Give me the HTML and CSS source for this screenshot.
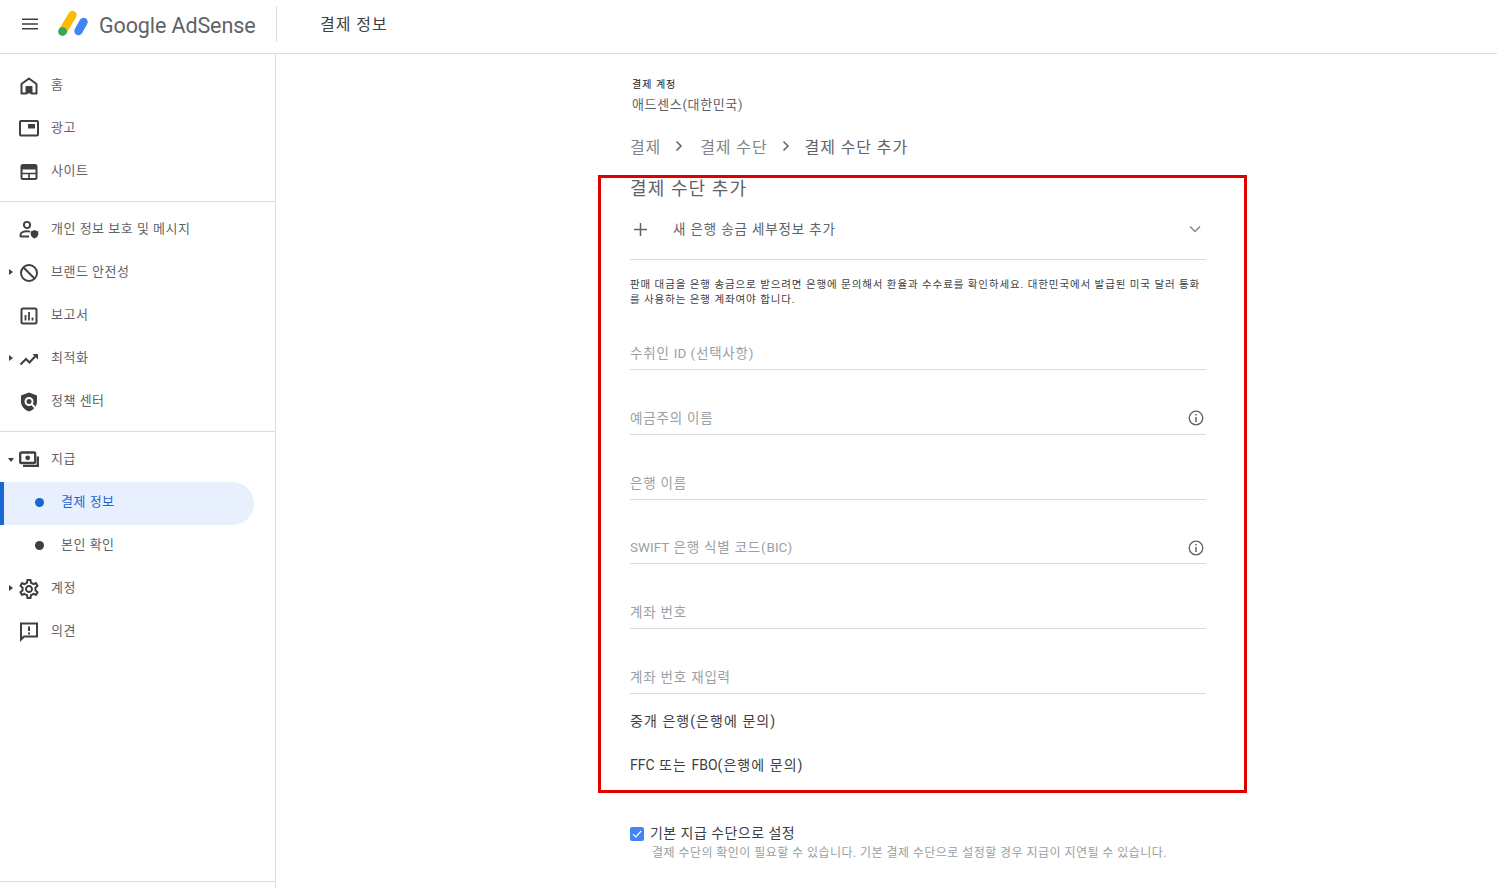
FILE: index.html
```html
<!DOCTYPE html>
<html lang="ko">
<head>
<meta charset="utf-8">
<title>결제 정보</title>
<link rel="stylesheet" href="styles.css">
</head>
<body>
<header class="topbar">
  <div class="brand">
    <svg class="menu-icon" viewBox="0 0 18 12"><path d="M0 1h17M0 6h17M0 11h17" stroke="#3c4043" stroke-width="1.7" fill="none"/></svg>
    <svg class="logo" viewBox="0 0 32 28"><path d="M6 21 15.500 5" stroke="#fbbc04" stroke-width="8.400" stroke-linecap="round" fill="none"/><path d="M21.500 21 26.500 12" stroke="#4285f4" stroke-width="8.400" stroke-linecap="round" fill="none"/><circle cx="5.500" cy="21.500" r="4.400" fill="#34a853"/></svg>
    <span class="brand-text">Google AdSense</span>
  </div>
  <div class="page-title"><span class="page-title-sep"></span>결제 정보</div>
</header>
<div class="layout">
  <nav class="sidebar">
    <div class="nav-group first">
      <a class="nav-row"><svg class="ico" viewBox="0 0 20 20"><path d="M2.500 17.500V8L10 2.500 17.500 8v9.500h-5V11h-5v6.500z" fill="none" stroke="#3c4043" stroke-width="2" stroke-linejoin="round"/><rect x="7.500" y="11" width="5" height="6.500" fill="#3c4043"/></svg><span>홈</span></a>
      <a class="nav-row"><svg class="ico" viewBox="0 0 20 20"><rect x="1" y="2" width="18" height="14.500" rx="1" fill="none" stroke="#3c4043" stroke-width="2"/><rect x="9" y="5" width="7" height="4.500" fill="#3c4043"/></svg><span>광고</span></a>
      <a class="nav-row"><svg class="ico" viewBox="0 0 20 20"><rect x="2.500" y="3" width="15" height="14" rx="1.500" fill="none" stroke="#3c4043" stroke-width="2"/><rect x="2" y="3" width="16" height="4.500" fill="#3c4043"/><path d="M2 11.500h16M10 11.500V17" stroke="#3c4043" stroke-width="1.600"/></svg><span>사이트</span></a>
    </div>
    <div class="nav-group">
      <a class="nav-row"><svg class="ico" viewBox="0 0 20 20"><circle cx="8" cy="5" r="3.100" fill="none" stroke="#3c4043" stroke-width="1.900"/><path d="M1.500 17v-2c0-2.500 3.500-3.700 6.500-3.700 1 0 2 .1 3 .4M1.500 16.500h8.500" fill="none" stroke="#3c4043" stroke-width="1.900"/><path d="M15.500 10l3.800 1.400v2.600c0 2.300-1.600 3.700-3.800 4.500-2.200-.8-3.800-2.200-3.800-4.500v-2.600z" fill="#3c4043"/></svg><span>개인 정보 보호 및 메시지</span></a>
      <a class="nav-row"><span class="caret"></span><svg class="ico" viewBox="0 0 20 20"><circle cx="10" cy="10" r="8" fill="none" stroke="#3c4043" stroke-width="2"/><path d="M4.500 4.500l11 11" stroke="#3c4043" stroke-width="2"/></svg><span>브랜드 안전성</span></a>
      <a class="nav-row"><svg class="ico" viewBox="0 0 20 20"><rect x="2.500" y="2.500" width="15" height="15" rx="1.500" fill="none" stroke="#3c4043" stroke-width="2"/><path d="M6.500 9v5.500M10 6v8.500M13.500 11.500v3" stroke="#3c4043" stroke-width="1.800"/></svg><span>보고서</span></a>
      <a class="nav-row"><span class="caret"></span><svg class="ico" viewBox="0 0 20 20"><path d="M1.500 15.500l5.500-5.500 3.500 3.500 6-6.500" fill="none" stroke="#3c4043" stroke-width="2.100"/><path d="M13.500 5h5.500v5.500z" fill="#3c4043"/></svg><span>최적화</span></a>
      <a class="nav-row"><svg class="ico" viewBox="0 0 20 20"><path d="M10 .500l8 3v6c0 4.700-3.300 8.300-8 10-4.700-1.700-8-5.300-8-10v-6z" fill="#3c4043"/><circle cx="10" cy="9.500" r="3.500" fill="none" stroke="#fff" stroke-width="2"/><path d="M12.500 12l3.500 3.500" stroke="#fff" stroke-width="2"/></svg><span>정책 센터</span></a>
    </div>
    <div class="nav-group">
      <a class="nav-row"><span class="caret open"></span><svg class="ico" viewBox="0 0 20 20"><rect x="1.200" y="2.500" width="15" height="10.500" rx="1" fill="none" stroke="#3c4043" stroke-width="2.300"/><circle cx="8.700" cy="7.800" r="2.400" fill="#3c4043"/><path d="M18.800 6.500V15.800H4" fill="none" stroke="#3c4043" stroke-width="2.300"/></svg><span>지급</span></a>
      <a class="nav-row sub active"><span class="dot"></span><span>결제 정보</span></a>
      <a class="nav-row sub"><span class="dot"></span><span>본인 확인</span></a>
      <a class="nav-row"><span class="caret"></span><svg class="ico" viewBox="2 2 20 20"><path fill="#3c4043" d="M19.430 12.980c.04-.32.070-.64.070-.98s-.03-.66-.07-.98l2.110-1.650c.19-.15.240-.42.120-.64l-2-3.460c-.12-.22-.39-.3-.61-.22l-2.490 1c-.52-.4-1.080-.73-1.690-.98l-.38-2.650A.49.49 0 0 0 14 2h-4c-.25 0-.46.180-.49.420l-.38 2.650c-.61.250-1.170.590-1.690.980l-2.490-1c-.23-.090-.49 0-.61.220l-2 3.460c-.13.220-.07.490.12.640l2.110 1.650c-.04.320-.07.650-.07.980s.03.660.07.980l-2.110 1.650c-.19.150-.24.420-.12.640l2 3.460c.12.220.39.300.61.220l2.490-1c.52.400 1.080.730 1.690.980l.38 2.650c.03.240.24.420.49.420h4c.25 0 .46-.18.490-.42l.38-2.650c.61-.25 1.170-.59 1.690-.98l2.490 1c.23.090.49 0 .61-.22l2-3.460c.12-.22.070-.49-.12-.64l-2.110-1.650zM17.450 11.270c.04.310.05.520.05.730s-.02.430-.05.730l-.14 1.130.89.700 1.080.840-.7 1.210-1.270-.51-1.040-.42-.9.680c-.43.320-.84.560-1.250.730l-1.060.430-.16 1.130-.2 1.350h-1.400l-.19-1.350-.16-1.130-1.060-.43c-.43-.18-.83-.41-1.230-.71l-.91-.7-1.060.43-1.270.51-.7-1.210 1.080-.84.890-.7-.14-1.130c-.03-.31-.05-.54-.05-.74s.02-.43.05-.73l.14-1.130-.89-.7-1.080-.84.7-1.210 1.270.51 1.040.42.900-.68c.43-.32.840-.56 1.250-.73l1.060-.43.160-1.130.2-1.350h1.390l.19 1.350.16 1.130 1.060.43c.43.180.83.410 1.230.71l.91.700 1.060-.43 1.270-.51.7 1.210-1.070.85-.89.7.14 1.130zM12 8c-2.210 0-4 1.790-4 4s1.790 4 4 4 4-1.790 4-4-1.790-4-4-4zm0 6c-1.100 0-2-.9-2-2s.9-2 2-2 2 .9 2 2-.9 2-2 2z"/></svg><span>계정</span></a>
      <a class="nav-row"><svg class="ico" viewBox="0 0 20 20"><path d="M2 1.500h16v13H5l-3 3z" fill="none" stroke="#3c4043" stroke-width="2" stroke-linejoin="miter"/><path d="M10 4.500v4.500M10 10.500v2" stroke="#3c4043" stroke-width="2"/></svg><span>의견</span></a>
    </div>
  </nav>
  <main class="main">
    <div class="account">
      <div class="account-label">결제 계정</div>
      <div class="account-name">애드센스(대한민국)</div>
    </div>
    <div class="crumbs">
      <span>결제</span><svg class="chev" viewBox="0 0 8 12"><path d="M1.500 1.500 6 6l-4.500 4.500" fill="none" stroke="#5f6368" stroke-width="1.500"/></svg>
      <span>결제 수단</span><svg class="chev" viewBox="0 0 8 12"><path d="M1.500 1.500 6 6l-4.500 4.500" fill="none" stroke="#5f6368" stroke-width="1.500"/></svg>
      <span class="crumb-now">결제 수단 추가</span>
    </div>
    <section class="redbox">
      <h1 class="form-title">결제 수단 추가</h1>
      <div class="add-row">
        <svg class="plus" viewBox="0 0 14 14"><path d="M7 0v14M0 7h14" stroke="#5f6368" stroke-width="1.600"/></svg>
        <span class="add-label">새 은행 송금 세부정보 추가</span>
        <svg class="down" viewBox="0 0 12 8"><path d="M1 1.500l5 5 5-5" fill="none" stroke="#80868b" stroke-width="1.500"/></svg>
      </div>
      <p class="notice">판매 대금을 은행 송금으로 받으려면 은행에 문의해서 환율과 수수료를 확인하세요. 대한민국에서 발급된 미국 달러 통화를 사용하는 은행 계좌여야 합니다.</p>
      <div class="field first-field"><span>수취인 <span class="lat">ID</span> (선택사항)</span></div>
      <div class="field"><span>예금주의 이름</span><svg class="info" viewBox="0 0 16 16"><circle cx="8" cy="8" r="6.800" fill="none" stroke="#5f6368" stroke-width="1.300"/><path d="M8 7v5M8 4v1.600" stroke="#5f6368" stroke-width="1.500"/></svg></div>
      <div class="field"><span>은행 이름</span></div>
      <div class="field latin-row"><span><span class="lat">SWIFT</span> 은행 식별 코드(<span class="lat">BIC</span>)</span><svg class="info" viewBox="0 0 16 16"><circle cx="8" cy="8" r="6.800" fill="none" stroke="#5f6368" stroke-width="1.300"/><path d="M8 7v5M8 4v1.600" stroke="#5f6368" stroke-width="1.500"/></svg></div>
      <div class="field"><span>계좌 번호</span></div>
      <div class="field"><span>계좌 번호 재입력</span></div>
      <div class="plain first-plain">중개 은행(은행에 문의)</div>
      <div class="plain"><span class="lat">FFC</span> 또는 <span class="lat">FBO</span>(은행에 문의)</div>
    </section>
    <div class="check-row">
      <span class="checkbox"><svg viewBox="0 0 14 14"><path d="M3 7.200l2.800 2.800L11.200 4" fill="none" stroke="#fff" stroke-width="1.200"/></svg></span>
      <div>
        <div class="check-label">기본 지급 수단으로 설정</div>
        <div class="check-help">결제 수단의 확인이 필요할 수 있습니다. 기본 결제 수단으로 설정할 경우 지급이 지연될 수 있습니다.</div>
      </div>
    </div>
  </main>
</div>
</body>
</html>
```
FILE: styles.css
```css
* { box-sizing: border-box; }
html, body { height: 100%; }
body {
  margin: 0;
  height: 888px;
  overflow: hidden;
  background: #fff;
  color: #3c4043;
  font-family: Roboto, "Noto Sans CJK KR", sans-serif;
  font-size: 13px;
}
.lat { letter-spacing: 0; }
.topbar {
  height: 54px;
  display: flex;
  border-bottom: 1px solid #dadce0;
}
.brand {
  width: 276px;
  display: flex;
  align-items: center;
  padding: 0 0 6px 22px;
}
.menu-icon { width: 17px; height: 12px; flex: none; }
.logo { width: 32px; height: 28px; margin-left: 18px; flex: none; }
.brand-text {
  margin: 3px 0 0 10px;
  font-size: 21.500px;
  color: #5f6368;
  letter-spacing: -0.1px;
  white-space: nowrap;
}
.page-title {
  position: relative;
  padding: 16px 0 0 44px;
  font-size: 16px;
  line-height: 18px;
  letter-spacing: 0.95px;
  color: #3c4043;
}
.page-title-sep {
  position: absolute;
  left: 0;
  top: 6px;
  width: 1px;
  height: 36px;
  background: #dadce0;
}
.layout { display: flex; height: 834px; }
.sidebar {
  width: 276px;
  flex: none;
  border-right: 1px solid #dadce0;
}
.nav-group {
  padding: 5px 0 9px;
  border-bottom: 1px solid #dadce0;
}
.nav-group.first { padding-top: 9px; }
.nav-group:last-child { height: 450px; }
.nav-row {
  position: relative;
  height: 43px;
  display: flex;
  align-items: center;
  padding-left: 19px;
  color: #5f6368;
  font-size: 13px;
  letter-spacing: 0.5px;
}
.nav-row > span:last-child { padding-bottom: 2px; }
.ico { width: 20px; height: 20px; flex: none; margin: 2px 12px 0 0; }
.caret {
  position: absolute;
  left: 9px;
  top: 19px;
  border-left: 4px solid #3c4043;
  border-top: 3px solid transparent;
  border-bottom: 3px solid transparent;
}
.caret.open {
  left: 8px;
  top: 21px;
  border-top: 4px solid #3c4043;
  border-left: 3px solid transparent;
  border-right: 3px solid transparent;
  border-bottom: 0;
}
.sub { padding-left: 35px; }
.dot {
  width: 9px;
  height: 9px;
  border-radius: 50%;
  background: #3c4043;
  margin: 2px 17px 0 0;
}
.active {
  width: 254px;
  margin: 2px 0 -2px;
  padding-bottom: 4px;
  background: #e8f0fe;
  border-left: 4px solid #1a66d6;
  border-radius: 0 22px 22px 0;
  padding-left: 31px;
  color: #1a66d6;
}
.active .dot { background: #1a66d6; }
.main {
  flex: 1;
  padding: 24px 0 0 322px;
}
.account { padding-left: 34px; }
.account-label { font-size: 10px; line-height: 14px; letter-spacing: 1px; color: #202124; }
.account-name { margin-top: 4px; font-size: 13px; line-height: 18px; letter-spacing: 0.65px; color: #5f6368; }
.crumbs {
  display: flex;
  align-items: center;
  margin-top: 21px;
  padding-left: 32px;
  height: 22px;
  font-size: 16px;
  letter-spacing: 0.9px;
  color: #80868b;
}
.chev { width: 8px; height: 12px; margin: 0 17px 0 14px; }
.crumb-now { margin-left: -2px; color: #5f6368; }
.redbox {
  width: 649px;
  height: 618px;
  margin-top: 18px;
  padding: 1px 38px 0 29px;
  border: 3px solid #e00000;
}
.form-title {
  margin: 0;
  font-size: 18px;
  font-weight: 400;
  line-height: 20px;
  letter-spacing: 1.1px;
  color: #5f6368;
}
.add-row {
  display: flex;
  align-items: center;
  height: 61px;
  padding: 0 3px 0 4px;
  border-bottom: 1px solid #dadce0;
  color: #5f6368;
  font-size: 13.500px;
  letter-spacing: 0.85px;
}
.plus { width: 13px; height: 13px; margin-right: 26px; }
.add-label { flex: 1; padding-bottom: 2px; }
.down { width: 12px; height: 8px; margin-right: 2px; }
.notice {
  margin: 17px 0 0;
  font-size: 10.500px;
  line-height: 15px;
  letter-spacing: 0.9px;
  color: #3c4043;
}
.field {
  display: flex;
  align-items: center;
  justify-content: space-between;
  height: 32px;
  margin-top: 32.800px;
  padding: 0 2px 3px 0;
  border-bottom: 1px solid #dadce0;
  color: #9aa0a6;
  font-size: 13.500px;
  letter-spacing: 0.8px;
}
.first-field { margin-top: 31px; }
.info { width: 16px; height: 16px; margin-top: 3px; }
.plain {
  margin-top: 18px;
  height: 26px;
  line-height: 26px;
  font-size: 14px;
  letter-spacing: 1.05px;
  color: #3c4043;
}
.first-plain { margin-top: 14px; }
.check-row {
  display: flex;
  margin: 31px 0 0 32px;
}
.checkbox {
  width: 14px;
  height: 14px;
  margin-right: 6px;
  margin-top: 3px;
  border-radius: 2px;
  background: #4285f4;
  flex: none;
}
.checkbox svg { display: block; width: 14px; height: 14px; }
.check-label { font-size: 14px; line-height: 18px; letter-spacing: 0.45px; color: #3c4043; }
.check-help { margin: 3px 0 0 2px; font-size: 12px; line-height: 17px; letter-spacing: 0.45px; color: #9aa0a6; }
```
